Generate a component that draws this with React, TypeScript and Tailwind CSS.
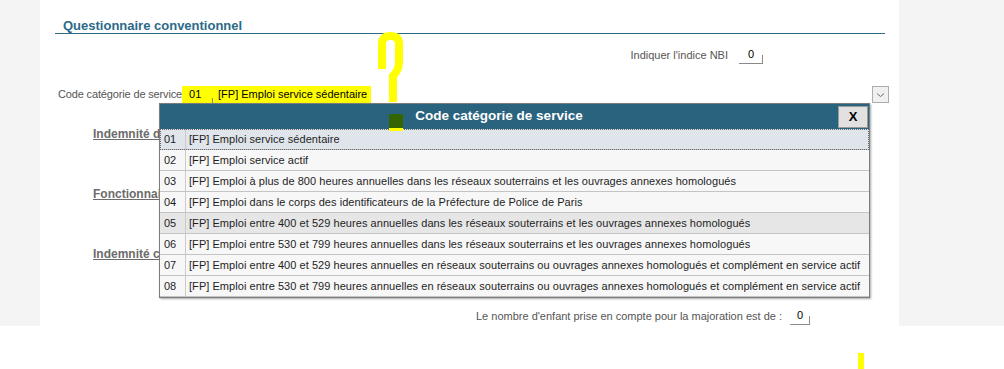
import type { ReactNode } from 'react'

const rows: [string, string][] = [
  ['01', '[FP] Emploi service sédentaire'],
  ['02', '[FP] Emploi service actif'],
  ['03', '[FP] Emploi à plus de 800 heures annuelles dans les réseaux souterrains et les ouvrages annexes homologués'],
  ['04', '[FP] Emploi dans le corps des identificateurs de la Préfecture de Police de Paris'],
  ['05', '[FP] Emploi entre 400 et 529 heures annuelles dans les réseaux souterrains et les ouvrages annexes homologués'],
  ['06', '[FP] Emploi entre 530 et 799 heures annuelles dans les réseaux souterrains et les ouvrages annexes homologués'],
  ['07', '[FP] Emploi entre 400 et 529 heures annuelles en réseaux souterrains ou ouvrages annexes homologués et complément en service actif'],
  ['08', '[FP] Emploi entre 530 et 799 heures annuelles en réseaux souterrains ou ouvrages annexes homologués et complément en service actif'],
]

function SmallInput({ value, w = 'w-[24px]' }: { value: string; w?: string }) {
  return (
    <span
      className={`relative flex h-[18px] ${w} items-center justify-center border-b border-[#8a8a8a] text-[11px] text-black after:absolute after:bottom-0 after:right-0 after:h-[8px] after:w-px after:bg-[#8a8a8a]`}
    >
      {value}
    </span>
  )
}

// section titles are partly hidden by the popup, so they are clipped at its left edge
function SectionLink({ children, mt }: { children: ReactNode; mt: string }) {
  return (
    <div
      className={`${mt} ml-[38px] h-[16px] w-[66px] overflow-hidden whitespace-nowrap text-[12px] leading-[16px] font-bold text-[#6b6b6b] underline`}
    >
      {children}
    </div>
  )
}

function Popup() {
  return (
    <div className="absolute left-[159px] top-[103px] w-[711px] border border-[#7c7c7c] bg-white shadow-[1px_1px_2px_rgba(0,0,0,0.35)]">
      <div className="flex h-[25px] items-center bg-[#2a637e]">
        <div className="flex-1 text-center text-[13.5px] font-bold text-white">Code catégorie de service</div>
        <button className="mr-[1px] flex h-[22px] w-[30px] items-center justify-center border border-[#9a9a9a] bg-[#e1e1e1] text-[13px] font-bold text-black">
          X
        </button>
      </div>
      {rows.map(([code, label], i) => (
        <div
          key={code}
          className={`flex h-[21px] items-center border-b border-[#c4c4c4] text-[11px] text-[#1e1e1e] ${
            i === 0
              ? 'bg-[#dfe5ea] outline-1 outline-dotted outline-offset-[-1px] outline-[#6a6a6a]'
              : i === 4
                ? 'bg-[#e6e6e6]'
                : 'bg-[#f7f7f7]'
          }`}
        >
          <span className="flex h-full w-[26px] items-center border-r border-[#cacaca] pl-[4px]">{code}</span>
          <span className="whitespace-nowrap pl-[3px] tracking-[0.05px]">{label}</span>
        </div>
      ))}
    </div>
  )
}

export default function App() {
  return (
    <div className="relative h-[369px] w-[1004px] overflow-hidden bg-white font-['Liberation_Sans',Arial,sans-serif]">
      <div className="flex h-[326px]">
        <div className="w-[40px] bg-[#f4f4f4]" />
        <div className="flex-1 bg-white">
          <div className="ml-[15px] w-[830px]">
            {/* title */}
            <div className="h-[34px] border-b border-[#2c6a86] pl-[8px] pt-[18px] text-[13px] leading-[15px] font-bold text-[#2b6a8a]">
              Questionnaire conventionnel
            </div>

            {/* NBI */}
            <div className="mt-[11px] flex h-[20px] items-center justify-end gap-[11px] pr-[122px] text-[11px] text-[#555]">
              <span>Indiquer l'indice NBI</span>
              <SmallInput value="0" />
            </div>

            {/* code categorie */}
            <div className="mt-[21px] flex h-[17px] items-center text-[11px]">
              <span className="pl-[3px] tracking-[-0.15px] text-[#555]">Code catégorie de service</span>
              <span className="flex h-[17px] w-[189px] items-center bg-[#ffff00] text-black">
                <span className="relative flex h-full w-[32px] items-center pl-[7px] after:absolute after:bottom-[-1px] after:right-[1px] after:h-[6px] after:w-px after:bg-[#8a8a8a]">
                  01
                </span>
                <span className="pl-[4px]">[FP] Emploi service sédentaire</span>
              </span>
              <span className="ml-auto mr-[-4px] flex h-[17px] w-[17px] items-center justify-center border border-[#adadad] bg-[#f0f0f0]">
                <svg width="9" height="6" viewBox="0 0 9 6" fill="none">
                  <path d="M1 1.5 L4.5 4.5 L8 1.5" stroke="#6f6f6f" strokeWidth="1" />
                </svg>
              </span>
            </div>

            <SectionLink mt="mt-[23px]">Indemnité de résidence</SectionLink>
            <SectionLink mt="mt-[44px]">Fonctionnaire logé</SectionLink>
            <SectionLink mt="mt-[44px]">Indemnité compensatrice</SectionLink>

            {/* enfants */}
            <div className="mt-[44px] flex h-[20px] items-center justify-end gap-[8px] pr-[75px] text-[11px] text-[#555]">
              <span>Le nombre d'enfant prise en compte pour la majoration est de :</span>
              <SmallInput value="0" w="w-[20px]" />
            </div>
          </div>
        </div>
        <div className="w-[105px] bg-[#f4f4f4]" />
      </div>

      <Popup />

      {/* yellow annotation marks */}
      <svg className="pointer-events-none absolute left-0 top-0" width="1004" height="369">
        <path
          d="M382 69 L382 44 Q382 36 390.5 36 Q399 36 399 44 L399 62 Q399 70 393 76 L393 102"
          stroke="#ffff00"
          strokeWidth="8"
          fill="none"
        />
      </svg>
      <div className="absolute left-[389px] top-[114px] h-[17px] w-[14px] border-b-[3px] border-[#ffff00] bg-[#336600]" />
      <div className="absolute left-[858px] top-[353px] h-[16px] w-[6px] bg-[#ffff00]" />
    </div>
  )
}
